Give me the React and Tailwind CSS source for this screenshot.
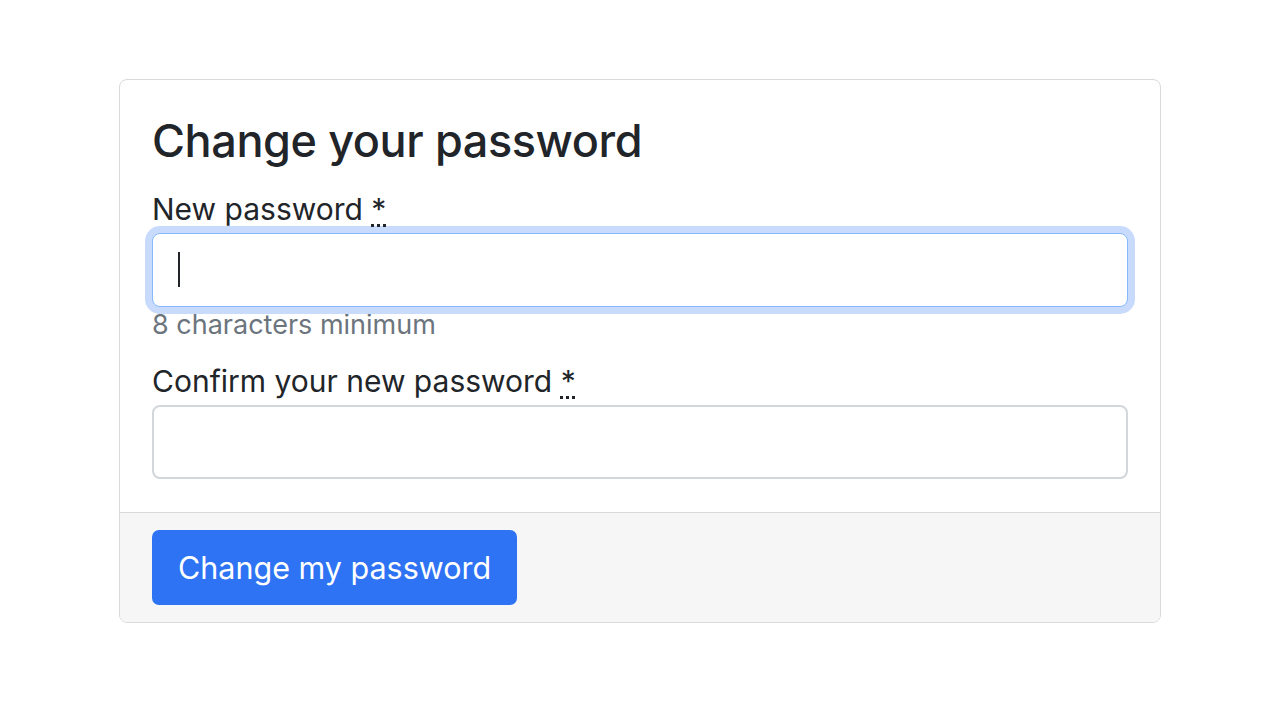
export default function App() {
  return (
    <div
      className="min-h-screen bg-white pt-[79px] px-[119px] text-[#212529]"
      style={{ fontFamily: "Inter, 'Noto Sans', sans-serif" }}
    >
      <div className="w-[1042px] border border-[#dadada] rounded-[8px] overflow-hidden">
        <div className="px-8 pt-8 pb-[33px]">
          <h1 className="text-[45px] leading-[58px] font-medium tracking-[-0.4px]">
            Change your password
          </h1>
          <label className="relative z-10 block mt-[21px] text-[30px] leading-[36px]">
            New password{" "}
            <abbr
              title="required"
              className="underline decoration-dotted decoration-[3px] underline-offset-[4px]"
            >
              *
            </abbr>
          </label>
          {/* focused field, caret drawn on top */}
          <div className="relative mt-[6px]">
            <input
              type="password"
              className="block w-full h-[74px] px-6 text-[28px] border border-[#86b7fe] rounded-[8px] outline-none bg-white ring-[7px] ring-[#c8dbfc]"
            />
            <span className="absolute left-[26px] top-[19px] w-[2px] h-[35px] bg-[#212529]" />
          </div>
          <p className="mt-[2px] text-[27px] leading-[32px] text-[#6c757d]">
            8 characters minimum
          </p>
          <label className="block mt-[22px] text-[30px] leading-[36px]">
            Confirm your new password{" "}
            <abbr
              title="required"
              className="underline decoration-dotted decoration-[3px] underline-offset-[4px]"
            >
              *
            </abbr>
          </label>
          <input
            type="password"
            className="block w-full h-[74px] mt-[6px] px-6 text-[28px] border-2 border-[#d3d6da] rounded-[8px] outline-none bg-white"
          />
        </div>
        <div className="bg-[#f6f6f6] border-t border-[#dadada] px-8 py-[17px]">
          <button className="h-[75px] px-[26px] rounded-[7px] bg-[#2d73f4] text-white text-[30.5px]">
            Change my password
          </button>
        </div>
      </div>
    </div>
  );
}
